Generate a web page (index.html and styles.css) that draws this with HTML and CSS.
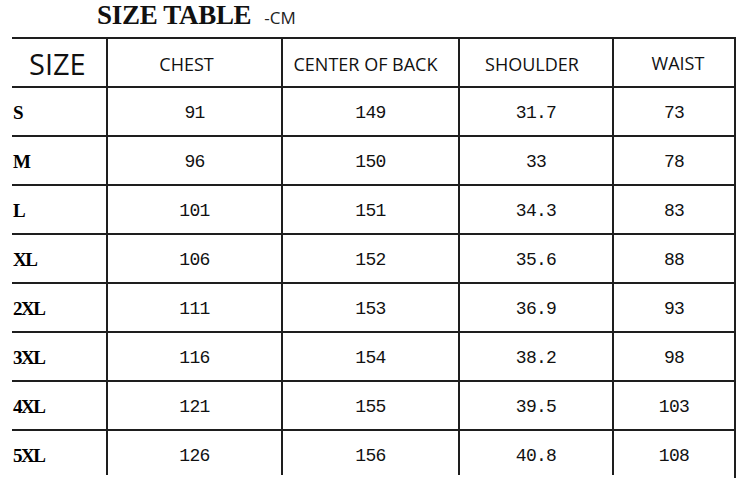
FILE: index.html
```html
<!DOCTYPE html>
<html>
<head>
<meta charset="utf-8">
<link rel="stylesheet" href="styles.css">
</head>
<body>
<div class="page">
  <div class="title">
    <span class="title-main">SIZE TABLE</span>
    <span class="title-unit">-CM</span>
  </div>
  <div class="table">
    <div class="cell head size">SIZE</div>
    <div class="cell head chest">CHEST</div>
    <div class="cell head back">CENTER OF BACK</div>
    <div class="cell head shoulder">SHOULDER</div>
    <div class="cell head waist">WAIST</div>

    <div class="cell label">S</div><div class="cell num">91</div><div class="cell num">149</div><div class="cell num">31.7</div><div class="cell num">73</div>
    <div class="cell label">M</div><div class="cell num">96</div><div class="cell num">150</div><div class="cell num">33</div><div class="cell num">78</div>
    <div class="cell label">L</div><div class="cell num">101</div><div class="cell num">151</div><div class="cell num">34.3</div><div class="cell num">83</div>
    <div class="cell label">XL</div><div class="cell num">106</div><div class="cell num">152</div><div class="cell num">35.6</div><div class="cell num">88</div>
    <div class="cell label">2XL</div><div class="cell num">111</div><div class="cell num">153</div><div class="cell num">36.9</div><div class="cell num">93</div>
    <div class="cell label">3XL</div><div class="cell num">116</div><div class="cell num">154</div><div class="cell num">38.2</div><div class="cell num">98</div>
    <div class="cell label">4XL</div><div class="cell num">121</div><div class="cell num">155</div><div class="cell num">39.5</div><div class="cell num">103</div>
    <div class="cell label last">5XL</div><div class="cell num last">126</div><div class="cell num last">156</div><div class="cell num last">40.8</div><div class="cell num last">108</div>
  </div>
</div>
</body>
</html>
```

FILE: styles.css
```css
html, body {
  margin: 0;
  padding: 0;
  background: #ffffff;
}

.page {
  width: 736px;
  height: 480px;
  overflow: hidden;
  color: #000;
}

.title {
  height: 37px;
  padding-left: 97px;
  box-sizing: border-box;
  display: flex;
  align-items: baseline;
  gap: 13px;
  padding-top: 0;
}

.title-main {
  font-family: "Liberation Serif", serif;
  font-weight: bold;
  font-size: 27px;
  letter-spacing: -0.3px;
  color: #111;
}

.title-unit {
  font-family: "Open Sans", sans-serif;
  font-size: 17px;
  color: #222;
}

.table {
  margin-left: 12px;
  width: 724px;
  box-sizing: border-box;
  border-right: 2px solid #1e1e1e;
  display: grid;
  grid-template-columns: 94px 175px 177px 154px 122px;
  grid-auto-rows: 49px;
}

.cell {
  box-sizing: border-box;
  border-top: 2px solid #1e1e1e;
  border-left: 2px solid #1e1e1e;
  display: flex;
  align-items: center;
  justify-content: center;
}

.cell.head.size,
.cell.label {
  border-left: none;
}

.head {
  font-family: "Open Sans", sans-serif;
  font-size: 18px;
  padding-top: 3px;
  color: #111;
}

.head.chest { padding-right: 16px; }
.head.back { padding-right: 10px; }
.head.shoulder { padding-right: 8px; }
.head.waist { padding-top: 0; padding-left: 8px; }

.head.size {
  font-size: 29px;
  padding-top: 2px;
  justify-content: flex-start;
  padding-left: 17px;
}

.label {
  justify-content: flex-start;
  padding-left: 1px;
  padding-top: 2px;
  font-family: "Liberation Serif", serif;
  font-weight: bold;
  font-size: 19px;
  letter-spacing: -1.5px;
}

.num {
  font-family: "Liberation Mono", monospace;
  font-size: 18px;
  letter-spacing: -0.7px;
  padding-top: 3px;
  color: #111;
}

.last {
  height: 46px;
  padding-top: 6px;
}
```
